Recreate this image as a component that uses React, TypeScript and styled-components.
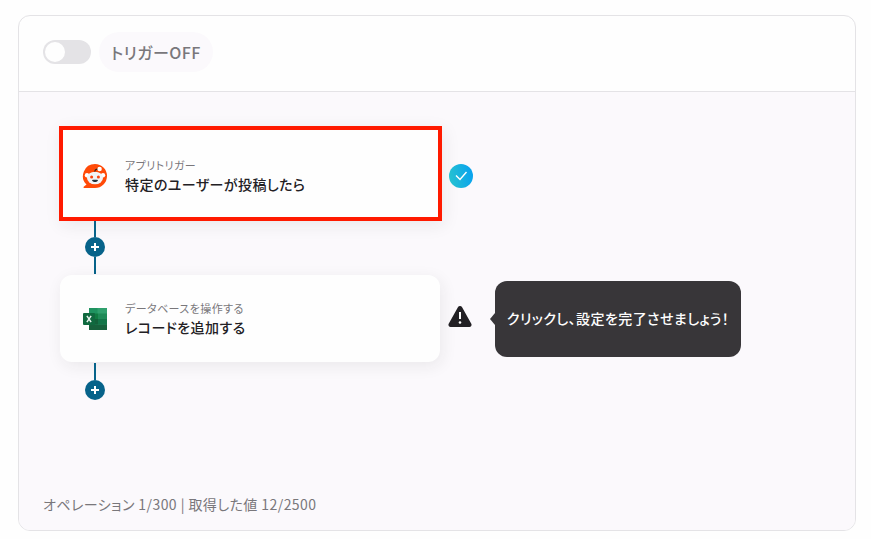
import styled, { createGlobalStyle } from "styled-components";

const App = () => {
  return (
    <>
      <GlobalStyle />

      <Panel>
        <Header>
          <Toggle>
            <Knob />
          </Toggle>
          <TriggerState>トリガーOFF</TriggerState>
        </Header>

        <Flow>
          <Step>
            <Card $selected>
              <RedditIcon />
              <CardText>
                <Caption>アプリトリガー</Caption>
                <Title>特定のユーザーが投稿したら</Title>
              </CardText>
            </Card>
            <Status $shift={4}>
              <CheckIcon />
            </Status>
          </Step>

          <Connector>
            <Line $height={16} />
            <AddButton />
            <Line $height={17} />
          </Connector>

          <Step $gap={8}>
            <Card>
              <ExcelIcon />
              <CardText>
                <Caption>データベースを操作する</Caption>
                <Title>レコードを追加する</Title>
              </CardText>
            </Card>
            <Status $shift={-4}>
              <WarningIcon />
            </Status>
            <Tooltip>クリックし、設定を完了させましょう！</Tooltip>
          </Step>

          <Connector>
            <Line $height={17} />
            <AddButton />
          </Connector>

          <Usage>オペレーション 1/300 | 取得した値 12/2500</Usage>
        </Flow>
      </Panel>
    </>
  );
};

const AddButton = () => (
  <Add aria-label="add">
    <svg width="20" height="20" viewBox="0 0 20 20">
      <path d="M10 6v8M6 10h8" stroke="#fff" strokeWidth="2" />
    </svg>
  </Add>
);

const RedditIcon = () => (
  <svg width="26" height="26" viewBox="0 0 26 26">
    <path
      d="M13 1a12 12 0 1 1 0 24H2.200c-.7 0-1-.8-.5-1.300L4.500 21.500A12 12 0 0 1 13 1z"
      fill="#ff4a08"
    />
    <circle cx="5" cy="12.300" r="2.200" fill="#fff" />
    <circle cx="21" cy="12.300" r="2.200" fill="#fff" />
    <ellipse cx="13" cy="15" rx="8" ry="6.300" fill="#f1f4f7" />
    <path d="M12.800 8.800c0-1.700 1.200-2.900 3-2.700" stroke="#33251f" strokeWidth="1.100" fill="none" />
    <circle cx="17.600" cy="6" r="2.200" fill="#fff" />
    <circle cx="9.600" cy="14" r="1.500" fill="#f94410" />
    <circle cx="16.400" cy="14" r="1.500" fill="#f94410" />
    <path d="M10 17c2-.4 4-.4 6 0-.5 2.700-5.500 2.700-6 0z" fill="#25323a" />
  </svg>
);

const ExcelIcon = () => (
  <svg width="26" height="26" viewBox="0 0 26 26">
    <rect x="7" y="2" width="9.500" height="22" fill="#1f9360" />
    <rect x="15.500" y="2" width="9.500" height="22" fill="#30a06d" />
    <path d="M7 7.500h9V13H7z" fill="#107c41" />
    <path d="M16 7.500h9V13h-9z" fill="#1f8a57" />
    <path d="M7 13h9v5.500H7z" fill="#14613b" />
    <path d="M16 13h9v5.500h-9z" fill="#137548" />
    <path d="M7 18.500h18V24H7z" fill="#17613c" />
    <rect x="1" y="7" width="12" height="12" rx="1" fill="#10693f" />
    <path d="M4.900 9.800l4.200 6.400M9.100 9.800l-4.200 6.400" stroke="#e9f4ee" strokeWidth="1.500" />
  </svg>
);

const CheckIcon = () => (
  <svg width="24" height="24" viewBox="0 0 24 24">
    <defs>
      <linearGradient id="check-fill" x1="0" y1="0.600" x2="1" y2="0.400">
        <stop offset="0" stopColor="#26c2d0" />
        <stop offset="1" stopColor="#08a2ef" />
      </linearGradient>
    </defs>
    <circle cx="12" cy="12" r="12" fill="url(#check-fill)" />
    <path d="M7 11.500l4 4 6.500-7.500" fill="none" stroke="#fff" strokeWidth="1.400" />
  </svg>
);

const WarningIcon = () => (
  <svg width="24" height="24" viewBox="0 0 24 24">
    <path
      d="M9.900 2.200a2.400 2.400 0 0 1 4.200 0l9.200 16.600a2.200 2.200 0 0 1-1.900 3.200H2.600a2.200 2.200 0 0 1-1.900-3.200z"
      fill="#222024"
    />
    <path d="M12 7v7" stroke="#fff" strokeWidth="2" />
    <circle cx="12" cy="17.500" r="1.300" fill="#fff" />
  </svg>
);

const GlobalStyle = createGlobalStyle`
  * {
    box-sizing: border-box;
  }

  body {
    margin: 0;
    background: #fefefe;
    color: #222024;
    font-family: "Noto Sans CJK JP", sans-serif;
    font-feature-settings: "palt";
    letter-spacing: 0.43px;
  }

  svg {
    display: block;
    flex-shrink: 0;
  }
`;

const Panel = styled.main`
  width: 838px;
  height: 516px;
  margin: 15px 0 0 18px;
  display: flex;
  flex-direction: column;

  border: 1px solid #e4e3e6;
  border-radius: 12px;
  overflow: hidden;
  background: #fefefe;
`;

const Header = styled.header`
  height: 76px;
  padding: 0 24px 4px;
  display: flex;
  align-items: center;
  gap: 8px;
  border-bottom: 1px solid #e4e3e6;
`;

const Toggle = styled.div`
  width: 48px;
  height: 24px;
  padding: 2px;
  border-radius: 12px;
  background: #e4e3e6;
`;

const Knob = styled.div`
  width: 20px;
  height: 20px;
  border-radius: 50%;
  background: #fefefe;
`;

const TriggerState = styled.div`
  height: 40px;
  padding: 0 12px;
  border-radius: 20px;
  background: #fbf9fc;
  color: #79777b;
  font-size: 16px;
  font-weight: 500;
  line-height: 40px;
`;

const Flow = styled.section`
  flex: 1;
  padding: 34px 40px 15px;
  display: flex;
  flex-direction: column;
  background: #fbf9fc;
`;

const Step = styled.div<{ $gap?: number }>`
  display: flex;
  align-items: center;
  gap: ${({ $gap }) => $gap ?? 7}px;
`;

const Card = styled.div<{ $selected?: boolean }>`
  width: ${({ $selected }) => ($selected ? 383 : 380)}px;
  height: ${({ $selected }) => ($selected ? 95 : 87)}px;
  margin-left: ${({ $selected }) => ($selected ? 0 : 1)}px;
  padding: ${({ $selected }) => ($selected ? "5px 19px 0" : "0 22px")};
  display: flex;
  align-items: center;
  gap: 17px;

  border: ${({ $selected }) => ($selected ? "4px solid #ff1a00" : "none")};
  border-radius: ${({ $selected }) => ($selected ? 0 : 12)}px;
  background: #fefefe;
  box-shadow: 2px 4px 16px rgba(34, 32, 36, 0.08);
`;

const Status = styled.div<{ $shift: number }>`
  padding-top: ${({ $shift }) => Math.max($shift, 0)}px;
  padding-bottom: ${({ $shift }) => Math.max(-$shift, 0)}px;
`;

const CardText = styled.div`
  padding-bottom: 2px;
  display: flex;
  flex-direction: column;
`;

const Caption = styled.span`
  color: #79777b;
  font-size: 11px;
  line-height: 18px;
`;

const Title = styled.span`
  font-size: 14px;
  font-weight: 500;
  line-height: 20px;
`;

const Connector = styled.div`
  width: 20px;
  margin-left: 26px;
  padding-bottom: 1px;
  display: flex;
  flex-direction: column;
  align-items: center;

  &:nth-last-child(2) {
    padding-top: 1px;
  }
`;

const Line = styled.div<{ $height: number }>`
  width: 2px;
  height: ${({ $height }) => $height}px;
  background: #07638a;
`;

const Add = styled.button`
  width: 20px;
  height: 20px;
  padding: 0;
  border: none;
  border-radius: 50%;
  background: #07638a;
`;

const Tooltip = styled.div`
  position: relative;
  width: 246px;
  height: 76px;
  margin-left: 15px;
  padding-left: 12px;

  border-radius: 12px;
  background: #383639;
  color: #fefefe;
  font-size: 14px;
  font-weight: 500;
  line-height: 75px;
  white-space: nowrap;

  /* arrow pointing at the warning icon */
  &::before {
    content: "";
    position: absolute;
    top: 32px;
    left: -5px;
    border: solid transparent;
    border-width: 6px 5px 6px 0;
    border-right-color: #383639;
  }
`;

const Usage = styled.footer`
  margin: auto 0 0 -16px;
  color: #79777b;
  font-size: 14px;
  line-height: 22px;
`;

export default App;
